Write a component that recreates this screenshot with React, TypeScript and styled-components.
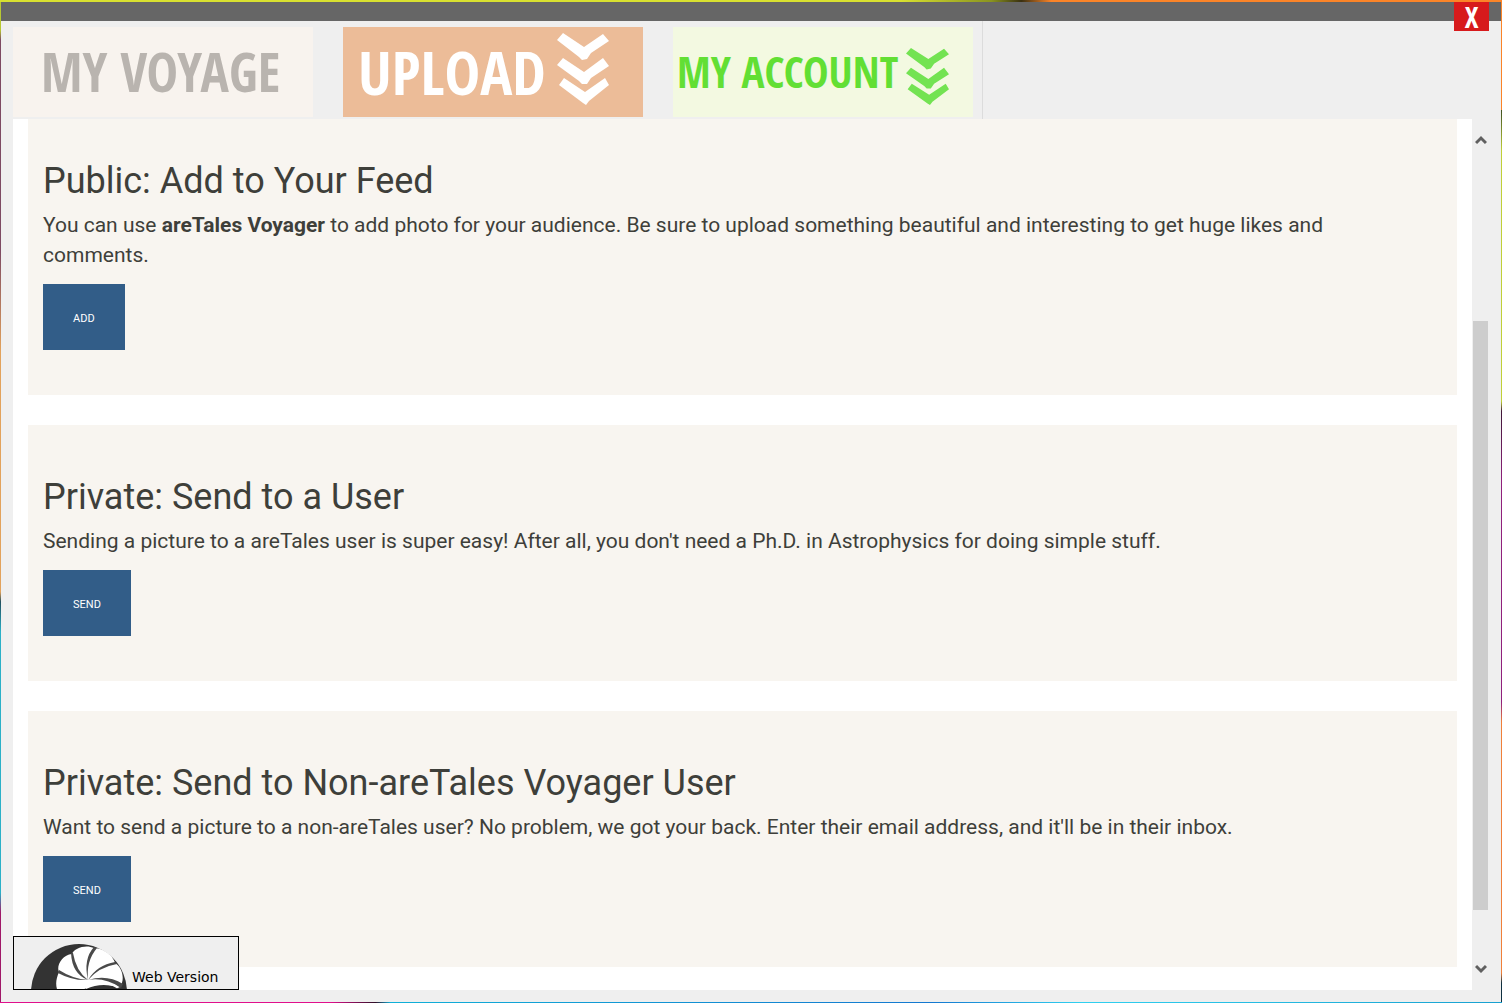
import React from "react";
import styled, { createGlobalStyle } from "styled-components";

const GlobalStyle = createGlobalStyle`
  * { box-sizing: border-box; }
  body { margin: 0; font-family: Roboto, "Liberation Sans", sans-serif; color: #3e3f3a; }
`;

const Desktop = styled.div`
  height: 100vh;
  padding: 2px 1px 1px;
  display: flex;
  background:
    linear-gradient(90deg, #d8e030 0 60%, #8a9420 66%, #3a3010 68%, #fb8428 70%, #fb8428) top / 100% 2px no-repeat,
    linear-gradient(90deg, #e0108c 0 22%, #301028 25%, #10b0d8 26%, #1478d0 62%, #30d0f0 72%, #18a0d0) bottom / 100% 1px no-repeat,
    linear-gradient(180deg, #b8c832 0 3%, #7d4a63 4% 25%, #e2a25c 35% 59%, #205060 60%, #2ab0c8 63% 89%, #a01868 91%) left / 1px 100% no-repeat,
    linear-gradient(180deg, #fb8428 0 11%, #405020 11%, #c0d038 15% 40%, #401838 41%, #90207c 48% 70%, #f0803a 72% 97%, #103040 98%) right / 1px 100% no-repeat;
`;

const AppWindow = styled.div`
  position: relative;
  flex: 1;
  min-width: 0;
  display: flex;
  flex-direction: column;
  background: #efefef;
`;

const TitleBar = styled.header`
  height: 19px;
  flex: none;
  display: flex;
  justify-content: flex-end;
  align-items: flex-start;
  padding-right: 12px;
  background: #666;
`;

const CloseButton = styled.button`
  width: 35px;
  height: 29px;
  padding: 0;
  border: 0;
  background: #d71a1c;
  color: #fff;
  font: bold 29px/27px "Open Sans Condensed", "Liberation Sans Narrow", Roboto, sans-serif;
`;

const Tabs = styled.nav`
  flex: none;
  display: flex;
  gap: 30px;
  height: 98px;
  margin-left: 12px;
  padding: 6px 9px 0 0;
  width: fit-content;
  border-right: 1px solid #dcdcdc;
`;

const Tab = styled.button<{ $bg: string; $fg: string; $size: number; $pad: number; $gap: number }>`
  display: flex;
  align-items: center;
  gap: ${(p) => p.$gap}px;
  width: 300px;
  height: 90px;
  padding: 0 0 0 ${(p) => p.$pad}px;
  border: 0;
  background: ${(p) => p.$bg};
  color: ${(p) => p.$fg};
  font: bold ${(p) => p.$size}px/88px "Open Sans Condensed", "Liberation Sans Narrow", Roboto, sans-serif;
  white-space: nowrap;
`;

const ChevronIcon = styled.svg<{ $top: number }>`
  align-self: flex-start;
  margin-top: ${(p) => p.$top}px;
`;

const Body = styled.div`
  flex: 1;
  min-height: 0;
  display: flex;
  padding: 0 13px 12px 12px;
`;

const Content = styled.main`
  flex: 1;
  min-width: 0;
  overflow: hidden;
  display: flex;
  flex-direction: column;
  gap: 30px;
  padding: 0 15px;
  background: #fff;
`;

const Card = styled.section<{ $first?: boolean }>`
  flex: none;
  padding: ${(p) => (p.$first ? 42 : 52)}px 15px 45px;
  background: #f8f5f0;
`;

const Title = styled.h2`
  margin: 0 0 9px;
  font-size: 36px;
  line-height: 40px;
  font-weight: 400;
`;

const Text = styled.p`
  margin: 0 0 14px;
  padding-right: 15px;
  font-size: 21px;
  line-height: 30px;
`;

const ActionButton = styled.button`
  display: block;
  height: 66px;
  padding: 3px 30px 0;
  border: 0;
  background: #325d88;
  color: #fff;
  font: 11px/16px Roboto, sans-serif;
`;

const ScrollBar = styled.div`
  width: 16px;
  flex: none;
  display: flex;
  flex-direction: column;
  align-items: flex-end;
  padding: 14px 0;
`;

const ScrollArrow = styled.button`
  width: 15px;
  height: 14px;
  padding: 0;
  border: 0;
  background: none;
  display: flex;
  align-items: center;
  justify-content: center;
`;

const ScrollTrack = styled.div`
  flex: 1;
  width: 15px;
  display: flex;
  flex-direction: column;
`;

const ScrollSpace = styled.div<{ $grow: number }>`
  flex: ${(p) => p.$grow};
`;

const ScrollThumb = styled.div`
  flex: 589;
  background: #cdcdcd;
`;

const WebVersion = styled.button`
  position: absolute;
  left: 12px;
  bottom: 12px;
  width: 226px;
  height: 54px;
  padding: 0 0 0 17px;
  display: flex;
  align-items: flex-end;
  gap: 4px;
  overflow: hidden;
  border: 1px solid #000;
  background: #efefef;
  color: #000;
  font: 14px/24px "DejaVu Sans", sans-serif;
`;

const Chevrons = ({ color, width, height, top }: { color: string; width: number; height: number; top: number }) => (
  <ChevronIcon $top={top} width={width} height={height} viewBox="0 0 52 72" preserveAspectRatio="none" aria-hidden="true">
    <g fill={color}>
      <path d="M6 0 27 14 46 1 52 8 34 20 30 26 25 27 22 24 0 7Z" />
      <path d="M6 25 27 39 46 25 52 33 34 45 30 51 25 51 22 48 0 32Z" />
      <path d="M7 45 28 59 48 45 52 52 32 68 29 72 26 70 2 52Z" />
    </g>
  </ChevronIcon>
);

const ShellLogo = () => (
  <svg width="97" height="45" viewBox="0 0 97 45" aria-hidden="true">
    <circle cx="48" cy="48" r="48" fill="#333" />
    <path
      d="M27 48C24 41 25 35 28 28 25 22 31 11 41 10 43 4 55 0 63 4 73 4 83 13 84 19 92 24 94 36 89 43L78 48Z"
      fill="#fff"
    />
    <g fill="#4a4a4a">
      <path d="M57 36Q41 30 40 9L42 9Q45 27 57 36Z" />
      <path d="M57 36Q52 15 63 3L66 4Q55 17 57 36Z" />
      <path d="M57 36Q66 21 84 18L86 20Q68 23 57 36Z" />
      <path d="M57 36Q42 37 27 29L28 26Q42 35 57 36Z" />
      <path d="M57 36Q76 30 92 40L90 44Q74 33 57 36Z" />
    </g>
    <path d="M50 48Q62 36 82 42L92 48Z" fill="#333" />
    <path d="M53 42Q67 35 85 41L86 43Q70 38 55 45Z" fill="#fff" />
  </svg>
);

const Arrow = ({ down }: { down?: boolean }) => (
  <svg width="12" height="10" viewBox="0 0 12 10" aria-hidden="true">
    <path d={down ? "M1 2 6 7 11 2" : "M1 8 6 3 11 8"} fill="none" stroke="#606060" strokeWidth="3" />
  </svg>
);

export default function App() {
  return (
    <>
      <GlobalStyle />
      <Desktop>
        <AppWindow>
          <TitleBar>
            <CloseButton>X</CloseButton>
          </TitleBar>
          <Tabs>
            <Tab $bg="#f8f3ee" $fg="#b9b4af" $size={53} $pad={28} $gap={0}>MY VOYAGE</Tab>
            <Tab $bg="#ecbc98" $fg="#fff" $size={60} $pad={15} $gap={11}>
              UPLOAD
              <Chevrons color="#fff" width={52} height={72} top={6} />
            </Tab>
            <Tab $bg="#f3f9e1" $fg="#62df34" $size={43} $pad={4} $gap={8}>
              MY ACCOUNT
              <Chevrons color="#73e352" width={43} height={57} top={21} />
            </Tab>
          </Tabs>
          <Body>
            <Content>
              <Card $first>
                <Title>Public: Add to Your Feed</Title>
                <Text>
                  You can use <b>areTales Voyager</b> to add photo for your audience. Be sure to upload something
                  beautiful and interesting to get huge likes and comments.
                </Text>
                <ActionButton>ADD</ActionButton>
              </Card>
              <Card>
                <Title>Private: Send to a User</Title>
                <Text>
                  Sending a picture to a areTales user is super easy! After all, you don't need a Ph.D. in
                  Astrophysics for doing simple stuff.
                </Text>
                <ActionButton>SEND</ActionButton>
              </Card>
              <Card>
                <Title>Private: Send to Non-areTales Voyager User</Title>
                <Text>
                  Want to send a picture to a non-areTales user? No problem, we got your back. Enter their email
                  address, and it'll be in their inbox.
                </Text>
                <ActionButton>SEND</ActionButton>
              </Card>
            </Content>
            <ScrollBar>
              <ScrollArrow aria-label="Scroll up"><Arrow /></ScrollArrow>
              <ScrollTrack>
                <ScrollSpace $grow={174} />
                <ScrollThumb />
                <ScrollSpace $grow={52} />
              </ScrollTrack>
              <ScrollArrow aria-label="Scroll down"><Arrow down /></ScrollArrow>
            </ScrollBar>
          </Body>
          <WebVersion>
            <ShellLogo />
            Web Version
          </WebVersion>
        </AppWindow>
      </Desktop>
    </>
  );
}
